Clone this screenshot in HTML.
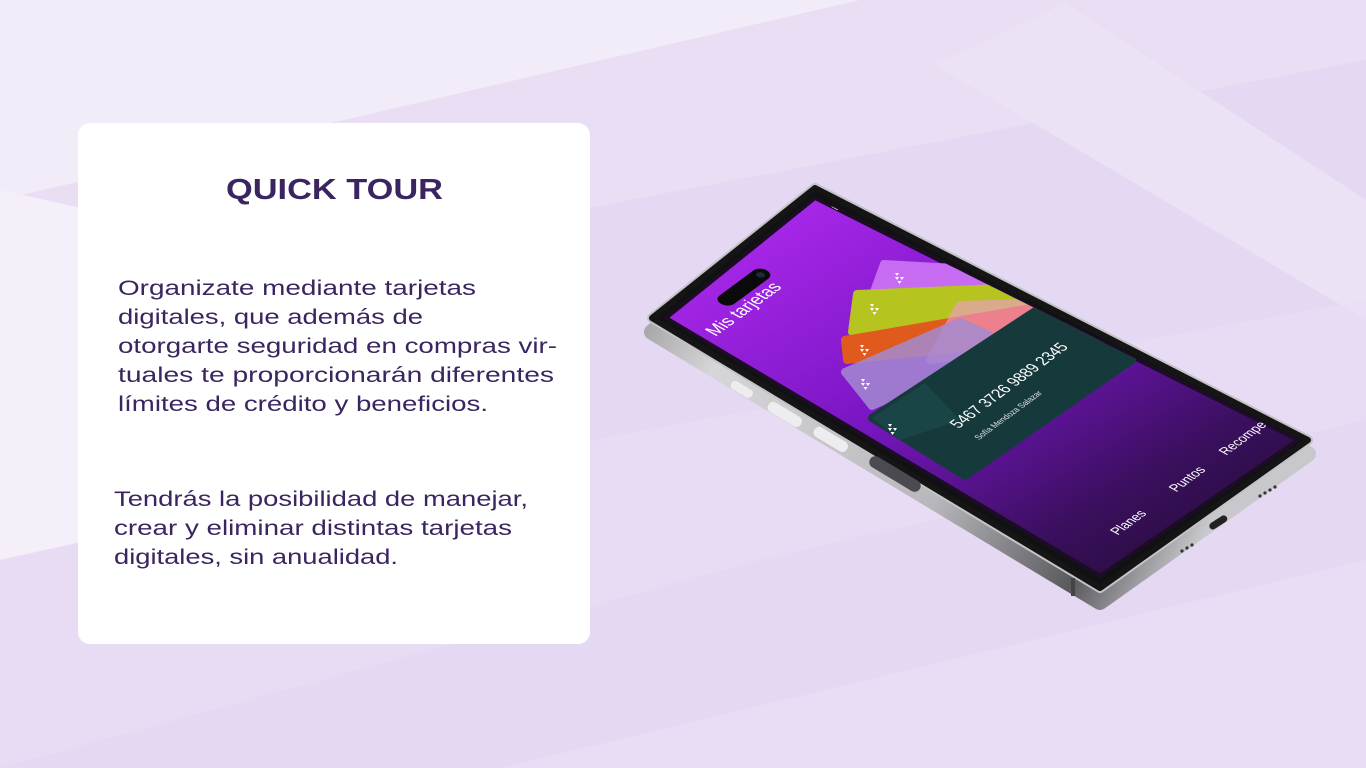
<!DOCTYPE html>
<html><head><meta charset="utf-8"><style>
html,body{margin:0;padding:0;width:1366px;height:768px;overflow:hidden;background:#e4d8f2;}
svg{display:block}
</style></head><body>
<svg width="1366" height="768" viewBox="0 0 1366 768" xmlns="http://www.w3.org/2000/svg">
<defs>
<linearGradient id="scr" x1="0" y1="0" x2="1" y2="1">
<stop offset="0" stop-color="#b62cf5"/><stop offset="0.45" stop-color="#7a16c4"/><stop offset="0.75" stop-color="#3a0f5e"/><stop offset="1" stop-color="#1c0d26"/>
</linearGradient>
<linearGradient id="frame" x1="0" y1="0" x2="1" y2="0.3">
<stop offset="0" stop-color="#8a8a8e"/><stop offset="0.2" stop-color="#d6d6d8"/><stop offset="0.6" stop-color="#b8b8bc"/><stop offset="0.85" stop-color="#5a5a5e"/><stop offset="1" stop-color="#c8c8cc"/>
</linearGradient>
<clipPath id="sc"><polygon points="666,318 815,198 1298,440 1100,576"/></clipPath>
<g id="logo" fill="#fff"><polygon points="0,0 4,0 2,3"/><polygon points="5,0 9,0 7,3"/><polygon points="2.5,4 6.5,4 4.5,7"/><polygon points="0,-4 4,-4 2,-1"/></g>
</defs>
<rect width="1366" height="768" fill="#e4d8f2"/>
<polygon points="0,0 860,0 0,200" fill="#f6f2fa"/>
<polygon points="0,0 1366,0 1366,60 0,320" fill="#ede4f6" opacity="0.5"/>
<polygon points="935,65 1065,3 1366,200 1366,320" fill="#ece2f6"/>
<polygon points="0,550 700,420 1366,300 1366,420 760,560 0,768" fill="#e9def5" opacity="0.7"/>
<polygon points="500,768 1366,560 1366,768" fill="#e8ddf5"/>
<polygon points="0,190 90,210 90,540 0,560" fill="#f4eff9"/>
<rect x="78" y="123" width="512" height="521" rx="12" fill="#ffffff"/>
<g font-family="Liberation Sans, sans-serif" fill="#3a2560">
<text x="226" y="199" font-size="29" font-weight="bold" textLength="217" lengthAdjust="spacingAndGlyphs">QUICK TOUR</text>
<g font-size="21.5">
<text x="118" y="295" textLength="358" lengthAdjust="spacingAndGlyphs">Organizate mediante tarjetas</text>
<text x="118" y="324" textLength="305" lengthAdjust="spacingAndGlyphs">digitales, que además de</text>
<text x="118" y="353" textLength="439" lengthAdjust="spacingAndGlyphs">otorgarte seguridad en compras vir-</text>
<text x="118" y="382" textLength="436" lengthAdjust="spacingAndGlyphs">tuales  te proporcionarán diferentes</text>
<text x="118" y="411" textLength="370" lengthAdjust="spacingAndGlyphs">límites de crédito y beneficios.</text>
<text x="114" y="506" textLength="414" lengthAdjust="spacingAndGlyphs">Tendrás la posibilidad de manejar,</text>
<text x="114" y="535" textLength="398" lengthAdjust="spacingAndGlyphs">crear y eliminar distintas tarjetas</text>
<text x="114" y="564" textLength="284" lengthAdjust="spacingAndGlyphs">digitales, sin anualidad.</text>
</g></g>
<!-- phone -->
<polygon points="652,332 815,202 1308,454 1100,602" fill="url(#frame)" stroke="url(#frame)" stroke-width="16" stroke-linejoin="round"/>
<polygon points="652,318 815,188 1308,440 1100,588" fill="#111" stroke="#c4c4c8" stroke-width="10" stroke-linejoin="round"/>
<polygon points="652,318 815,188 1308,440 1100,588" fill="#111" stroke="#151515" stroke-width="6" stroke-linejoin="round"/>
<polygon points="666,318 815,198 1298,440 1100,576" fill="url(#scr)" stroke="#1a0d24" stroke-width="4" stroke-linejoin="round"/>
<rect x="1071" y="578" width="4" height="18" fill="#444"/>
<rect x="730" y="385" width="24" height="9" rx="4" fill="#ededf0" transform="rotate(31 742 389)"/>
<rect x="766" y="409" width="38" height="11" rx="5" fill="#ededf0" transform="rotate(31 785 414)"/>
<rect x="812" y="434" width="38" height="11" rx="5" fill="#ededf0" transform="rotate(31 831 439)"/>
<rect x="866" y="468" width="58" height="12" rx="6" fill="#4a4a50" transform="rotate(31 895 474)"/>
<rect x="1208" y="519" width="20" height="7" rx="3.5" fill="#222" transform="rotate(-33 1218 522)"/>
<g fill="#333"><circle cx="1182" cy="551" r="1.6"/><circle cx="1187" cy="548" r="1.6"/><circle cx="1192" cy="545" r="1.6"/><circle cx="1260" cy="496" r="1.6"/><circle cx="1265" cy="493" r="1.6"/><circle cx="1270" cy="490" r="1.6"/><circle cx="1275" cy="487" r="1.6"/></g>
<g clip-path="url(#sc)">
<g stroke-linejoin="round" stroke-width="8">
<polygon points="884,264 990,270 1060,300 860,330" fill="#c76cf2" stroke="#c76cf2"/>
<polygon points="857,294 1025,287 1100,325 852,332" fill="#b5c41e" stroke="#b5c41e"/>
<polygon points="845,340 1078,300 1112,332 847,360" fill="#e05a1e" stroke="#e05a1e"/>
<polygon points="960,305 1060,302 1108,338 930,360" fill="#f39ad6" stroke="#f39ad6" opacity="0.6"/>
<polygon points="845,372 960,322 1010,345 872,406" fill="#a48bd0" stroke="#a48bd0" opacity="0.85"/>
<polygon points="872,418 1040,308 1132,360 965,476" fill="#163a3c" stroke="#163a3c"/>
<polygon points="872,418 925,383 960,420 900,440" fill="#1d4a4b" opacity="0.7" stroke="none"/>
</g>
<use href="#logo" x="895" y="277"/>
<use href="#logo" x="870" y="308"/>
<use href="#logo" x="860" y="349"/>
<use href="#logo" x="861" y="383"/>
<use href="#logo" x="888" y="428"/>
<g transform="matrix(0.875,-0.645,1.145,0.63,665,318)">
<rect x="40" y="12" width="52" height="13" rx="6.5" fill="#0a0a0a"/>
<circle cx="85" cy="18.5" r="3" fill="#1f2a3a"/>
<text x="8" y="38" font-family="Liberation Sans, sans-serif" font-size="15" fill="#ffffff">Mis tarjetas</text>
<polygon points="180,8 184,5 188,8 188,13 180,13" fill="#e8d8f6"/>
<text x="45" y="222" font-family="Liberation Sans, sans-serif" font-size="13" fill="#fff">5467 3726 9889 2345</text>
<text x="45" y="240" font-family="Liberation Sans, sans-serif" font-size="7" fill="#e0e0e0">Sofía Mendoza Salazar</text>
<g font-family="Liberation Sans, sans-serif" font-size="11" fill="#ffffff">
<text x="28" y="374">Planes</text>
<text x="95" y="374">Puntos</text>
<text x="152" y="374">Recompen</text>
</g>
</g>
</g>
</svg>
</body></html>
